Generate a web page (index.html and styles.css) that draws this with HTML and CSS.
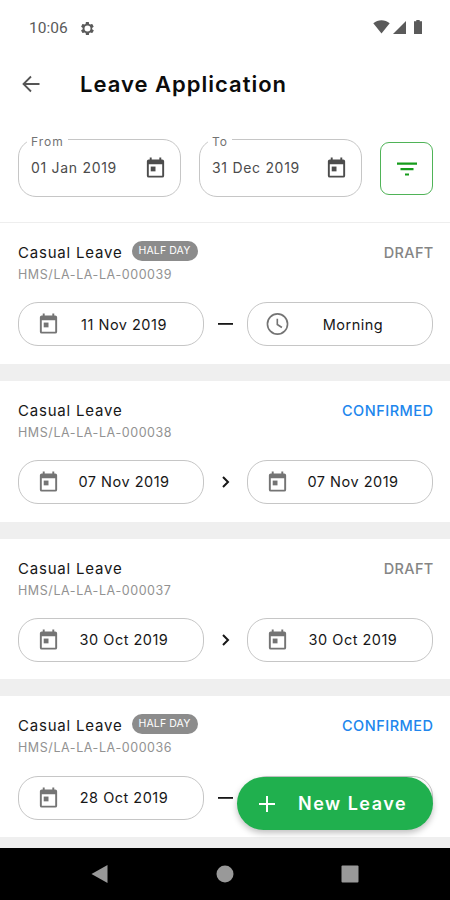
FILE: index.html
```html
<!DOCTYPE html>
<html lang="en">
<head>
    <meta charset="UTF-8">
    <title>Leave Application</title>
    <link rel="stylesheet" href="styles.css">
</head>
<body>
    <svg class="symbols">
        <symbol id="calendar" viewBox="0 0 24 24">
            <path d="M19 3h-1V1h-2v2H8V1H6v2H5a2 2 0 0 0-2 2v15a2 2 0 0 0 2 2h14a2 2 0 0 0 2-2V5a2 2 0 0 0-2-2zm0 17H5V8h14v12z"/>
            <path d="M7 10.5h5v5H7z"/>
        </symbol>
        <symbol id="clock" viewBox="0 0 24 24">
            <path fill="none" stroke="currentColor" stroke-width="1.7" d="M12 1.5a10.500 10.500 0 1 0 0 21a10.500 10.500 0 0 0 0-21M11.800 6.500v6l4.800 3.200"/>
        </symbol>
        <symbol id="chevron" viewBox="0 0 16 16">
            <path fill="none" stroke="currentColor" stroke-width="2" d="M5 3l5 5-5 5"/>
        </symbol>
        <symbol id="dash" viewBox="0 0 16 16">
            <path d="M0 7h15v1.800H0z"/>
        </symbol>
    </svg>

    <div class="status-bar">
        <span class="time">10:06</span>
        <svg class="gear" viewBox="0 0 24 24"><path fill-rule="evenodd" d="M19.4 13a7.5 7.5 0 0 0 0-2l2.3-1.7a.5.5 0 0 0 .1-.7l-2.200-3.700a.5.5 0 0 0-.6-.2l-2.700 1a8 8 0 0 0-1.700-1L14.200 2a.5.5 0 0 0-.5-.4H9.800a.5.5 0 0 0-.5.4l-.4 2.700a8 8 0 0 0-1.700 1l-2.700-1a.5.5 0 0 0-.6.2L1.900 8.600a.5.5 0 0 0 .1.7L4.300 11a7.500 7.500 0 0 0 0 2L2 14.700a.5.5 0 0 0-.1.7l2.100 3.700c.1.2.4.3.6.2l2.700-1a8 8 0 0 0 1.700 1l.4 2.700c0 .2.2.4.5.4h3.900c.3 0 .5-.2.5-.4l.4-2.700a8 8 0 0 0 1.700-1l2.700 1c.2.1.5 0 .6-.2l2.200-3.700a.5.5 0 0 0-.1-.7zM12 7.200a4.800 4.800 0 1 1 0 9.600a4.800 4.800 0 0 1 0-9.600z"/></svg>
        <div class="signals">
            <svg width="17" height="14" viewBox="0 0 17 14"><path d="M.3 3.200C5-.8 12-.8 16.700 3.200L8.500 13.600z"/></svg>
            <svg width="13" height="14" viewBox="0 0 13 14"><path d="M13 1v13H0z"/></svg>
            <svg width="8" height="14" viewBox="0 0 8 14"><path d="M2.300 0h3.400v1.300H8V14H0V1.300h2.300z"/></svg>
        </div>
    </div>

    <header class="header">
        <svg class="back" viewBox="0 0 18 18"><path d="M17.500 9H2M9 1.500L1.500 9L9 16.500"/></svg>
        <h1>Leave Application</h1>
    </header>

    <div class="filters">
        <div class="field">
            <label>From</label>
            <span class="field-date">01 Jan 2019</span>
            <svg class="icon"><use href="#calendar"/></svg>
        </div>
        <div class="field">
            <label>To</label>
            <span class="field-date">31 Dec 2019</span>
            <svg class="icon"><use href="#calendar"/></svg>
        </div>
        <button class="filter-btn">
            <svg width="20" height="14" viewBox="0 0 20 14"><path d="M0 .5h20v2.200H0zM3.500 6.100h13v2.100h-13zM8 11.600h4v2H8z"/></svg>
        </button>
    </div>

    <main class="list">
        <section class="card">
            <div class="card-top">
                <h2>Casual Leave</h2>
                <span class="badge">HALF DAY</span>
                <span class="status draft">DRAFT</span>
            </div>
            <p class="code">HMS/LA-LA-LA-000039</p>
            <div class="range">
                <div class="pill"><svg class="icon"><use href="#calendar"/></svg><span>11 Nov 2019</span></div>
                <svg class="sep"><use href="#dash"/></svg>
                <div class="pill"><svg class="icon"><use href="#clock"/></svg><span>Morning</span></div>
            </div>
        </section>
        <section class="card">
            <div class="card-top">
                <h2>Casual Leave</h2>
                <span class="status confirmed">CONFIRMED</span>
            </div>
            <p class="code">HMS/LA-LA-LA-000038</p>
            <div class="range">
                <div class="pill"><svg class="icon"><use href="#calendar"/></svg><span>07 Nov 2019</span></div>
                <svg class="sep"><use href="#chevron"/></svg>
                <div class="pill"><svg class="icon"><use href="#calendar"/></svg><span>07 Nov 2019</span></div>
            </div>
        </section>
        <section class="card">
            <div class="card-top">
                <h2>Casual Leave</h2>
                <span class="status draft">DRAFT</span>
            </div>
            <p class="code">HMS/LA-LA-LA-000037</p>
            <div class="range">
                <div class="pill"><svg class="icon"><use href="#calendar"/></svg><span>30 Oct 2019</span></div>
                <svg class="sep"><use href="#chevron"/></svg>
                <div class="pill"><svg class="icon"><use href="#calendar"/></svg><span>30 Oct 2019</span></div>
            </div>
        </section>
        <section class="card">
            <div class="card-top">
                <h2>Casual Leave</h2>
                <span class="badge">HALF DAY</span>
                <span class="status confirmed">CONFIRMED</span>
            </div>
            <p class="code">HMS/LA-LA-LA-000036</p>
            <div class="range">
                <div class="pill"><svg class="icon"><use href="#calendar"/></svg><span>28 Oct 2019</span></div>
                <svg class="sep"><use href="#dash"/></svg>
                <div class="pill"></div>
            </div>
        </section>
    </main>

    <button class="new-leave">
        <svg width="16" height="16" viewBox="0 0 16 16"><path d="M7 0h2v7h7v2H9v7H7V9H0V7h7z"/></svg>
        <span>New Leave</span>
    </button>

    <nav class="nav-bar">
        <svg viewBox="0 0 18 18"><path d="M16.500 0v18L.5 9z"/></svg>
        <svg viewBox="0 0 18 18"><circle cx="9" cy="9" r="8.500"/></svg>
        <svg viewBox="0 0 18 18"><rect x=".5" y=".5" width="17" height="17" rx="1"/></svg>
    </nav>
</body>
</html>
```
FILE: styles.css
```css
* {
    box-sizing: border-box;
}
body {
    margin: 0;
    height: 900px;
    display: flex;
    flex-direction: column;
    position: relative;
    overflow: hidden;
    background-color: #fff;
    color: #171717;
    font-family: Inter, "Open Sans", sans-serif;
}
svg {
    display: block;
    fill: currentColor;
    flex: none;
}
h1, h2, p {
    margin: 0;
}
button {
    font-family: inherit;
    padding: 0;
}
.symbols {
    position: absolute;
    width: 0;
    height: 0;
}
.status-bar {
    height: 56px;
    padding: 0 28px 0 29px;
    display: flex;
    align-items: center;
    color: #5a5a5a;
}
.time {
    width: 38px;
    font-family: Roboto, sans-serif;
    font-size: 15.5px;
    white-space: nowrap;
}
.gear {
    width: 15px;
    height: 15px;
    margin-left: 13px;
}
.signals {
    margin-left: auto;
    display: flex;
    align-items: center;
    margin-top: -2px;
}
.signals svg + svg {
    margin-left: 3px;
}
.signals svg:last-child {
    margin-left: 8px;
}
.header {
    height: 56px;
    padding: 0 22px;
    display: flex;
    align-items: center;
}
.back {
    width: 18px;
    height: 18px;
    fill: none;
    stroke: #555;
    stroke-width: 1.8;
}
h1 {
    margin-left: 40px;
    font-size: 22px;
    font-weight: 600;
    line-height: 30px;
    letter-spacing: 1px;
    color: #0c0c0c;
}
.filters {
    height: 111px;
    padding: 27px 17px 0 18px;
    display: flex;
    gap: 18px;
    border-bottom: 1px solid #eee;
}
.field {
    position: relative;
    width: 163px;
    height: 58px;
    padding: 0 13px 0 12px;
    display: flex;
    align-items: center;
    justify-content: space-between;
    border: 1px solid #c6c6c6;
    border-radius: 18px;
    color: #4c4c4c;
}
.field label {
    position: absolute;
    left: 8px;
    top: -6px;
    padding: 0 4px;
    background-color: #fff;
    font-size: 12px;
    line-height: 16px;
    letter-spacing: 1px;
    color: #737373;
}
.field-date {
    margin-top: -2px;
    font-size: 14px;
    letter-spacing: 0.7px;
    white-space: nowrap;
}
.icon {
    width: 23px;
    height: 24px;
}
.filter-btn {
    width: 53px;
    height: 53px;
    margin-top: 3px;
    display: flex;
    align-items: center;
    justify-content: center;
    background-color: #fff;
    border: 1px solid #4fb357;
    border-radius: 9px;
    color: #169c1c;
}
.list {
    flex: 1;
    min-height: 0;
    overflow: hidden;
    display: flex;
    flex-direction: column;
    gap: 17px;
    background-color: #efefef;
}
.card {
    flex: none;
    height: 140.8px;
    padding: 19px 17px 0 18px;
    background-color: #fff;
}
.card-top {
    height: 22px;
    display: flex;
    align-items: center;
}
h2 {
    font-size: 15px;
    font-weight: 400;
    letter-spacing: 0.8px;
    line-height: 22px;
}
.badge {
    height: 20px;
    width: 66px;
    margin: -4px 0 0 9px;
    border-radius: 10px;
    background-color: #8c8c8c;
    color: #fff;
    font-size: 10.5px;
    letter-spacing: 0.1px;
    line-height: 20px;
    text-align: center;
}
.status {
    margin-left: auto;
    margin-top: -1px;
    margin-right: -0.5px;
    font-size: 14.5px;
    font-weight: 500;
    letter-spacing: 0.5px;
}
.draft {
    color: #858585;
    letter-spacing: 0.3px;
}
.confirmed {
    color: #2086ed;
}
.code {
    margin-top: 1px;
    font-size: 12.5px;
    line-height: 20px;
    letter-spacing: 0.58px;
    color: #929292;
}
.range {
    margin-top: 17.2px;
    display: flex;
    align-items: center;
    justify-content: space-between;
}
.pill {
    width: 186px;
    height: 44px;
    padding: 0 15px 0 18px;
    display: flex;
    align-items: center;
    border: 1px solid #c6c6c6;
    border-radius: 20px;
}
.pill .icon {
    color: #747474;
}
.pill span {
    flex: 1;
    text-align: center;
    font-size: 14.5px;
    letter-spacing: 0.5px;
    white-space: nowrap;
}
.sep {
    width: 16px;
    height: 16px;
}
.new-leave {
    position: absolute;
    left: 237px;
    top: 777px;
    width: 196px;
    height: 53px;
    padding-left: 22px;
    display: flex;
    align-items: center;
    gap: 23px;
    border: 0;
    border-radius: 27px;
    background-color: #20b04e;
    box-shadow: 0 3px 6px rgba(0, 0, 0, 0.25);
    color: #fff;
    font-size: 18px;
    font-weight: 600;
    letter-spacing: 1.5px;
    white-space: nowrap;
}
.nav-bar {
    height: 52px;
    display: flex;
    align-items: center;
    justify-content: center;
    gap: 107px;
    background-color: #000;
    color: #999;
}
.nav-bar svg {
    width: 18px;
    height: 18px;
}
```
